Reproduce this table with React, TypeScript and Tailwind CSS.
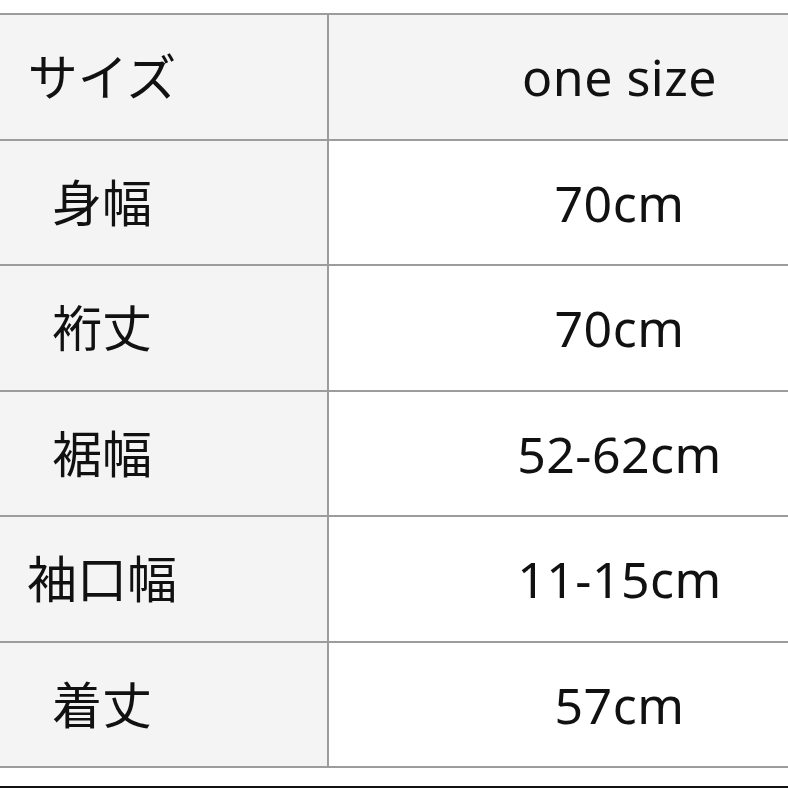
import React from "react";

const rows: { label: string; value: string; h: string; header?: boolean }[] = [
  { label: "サイズ", value: "one size", h: "h-[124px]", header: true },
  { label: "身幅", value: "70cm", h: "h-[125px]" },
  { label: "裄丈", value: "70cm", h: "h-[126px]" },
  { label: "裾幅", value: "52-62cm", h: "h-[125px]" },
  { label: "袖口幅", value: "11-15cm", h: "h-[126px]" },
  { label: "着丈", value: "57cm", h: "h-[125px]" },
];

export default function App() {
  return (
    <div
      className="w-[788px] h-[788px] bg-white overflow-hidden flex flex-col text-[#111] text-[50px] leading-none"
      style={{ fontFamily: '"Noto Sans", "Noto Sans CJK JP", sans-serif' }}
    >
      <div className="h-[13px] shrink-0" />
      <div className="border-t-2 border-b-2 border-[#9c9c9c] flex flex-col shrink-0">
        {rows.map((r, i) => (
          <div
            key={i}
            className={`flex ${r.h} ${i > 0 ? "border-t-2 border-[#9c9c9c]" : ""}`}
          >
            <div className="w-[327px] shrink-0 bg-[#f4f4f4] flex items-center justify-center pr-[123px] whitespace-nowrap">
              {r.label}
            </div>
            <div className="w-[2px] shrink-0 bg-[#9c9c9c]" />
            <div
              className={`flex-1 flex items-center justify-center pl-[122px] whitespace-nowrap tracking-[0.5px] ${
                r.header ? "bg-[#f4f4f4]" : "bg-white"
              }`}
            >
              {r.value}
            </div>
          </div>
        ))}
      </div>
      <div className="flex-1" />
      <div className="h-[2px] shrink-0 bg-[#111]" />
    </div>
  );
}
